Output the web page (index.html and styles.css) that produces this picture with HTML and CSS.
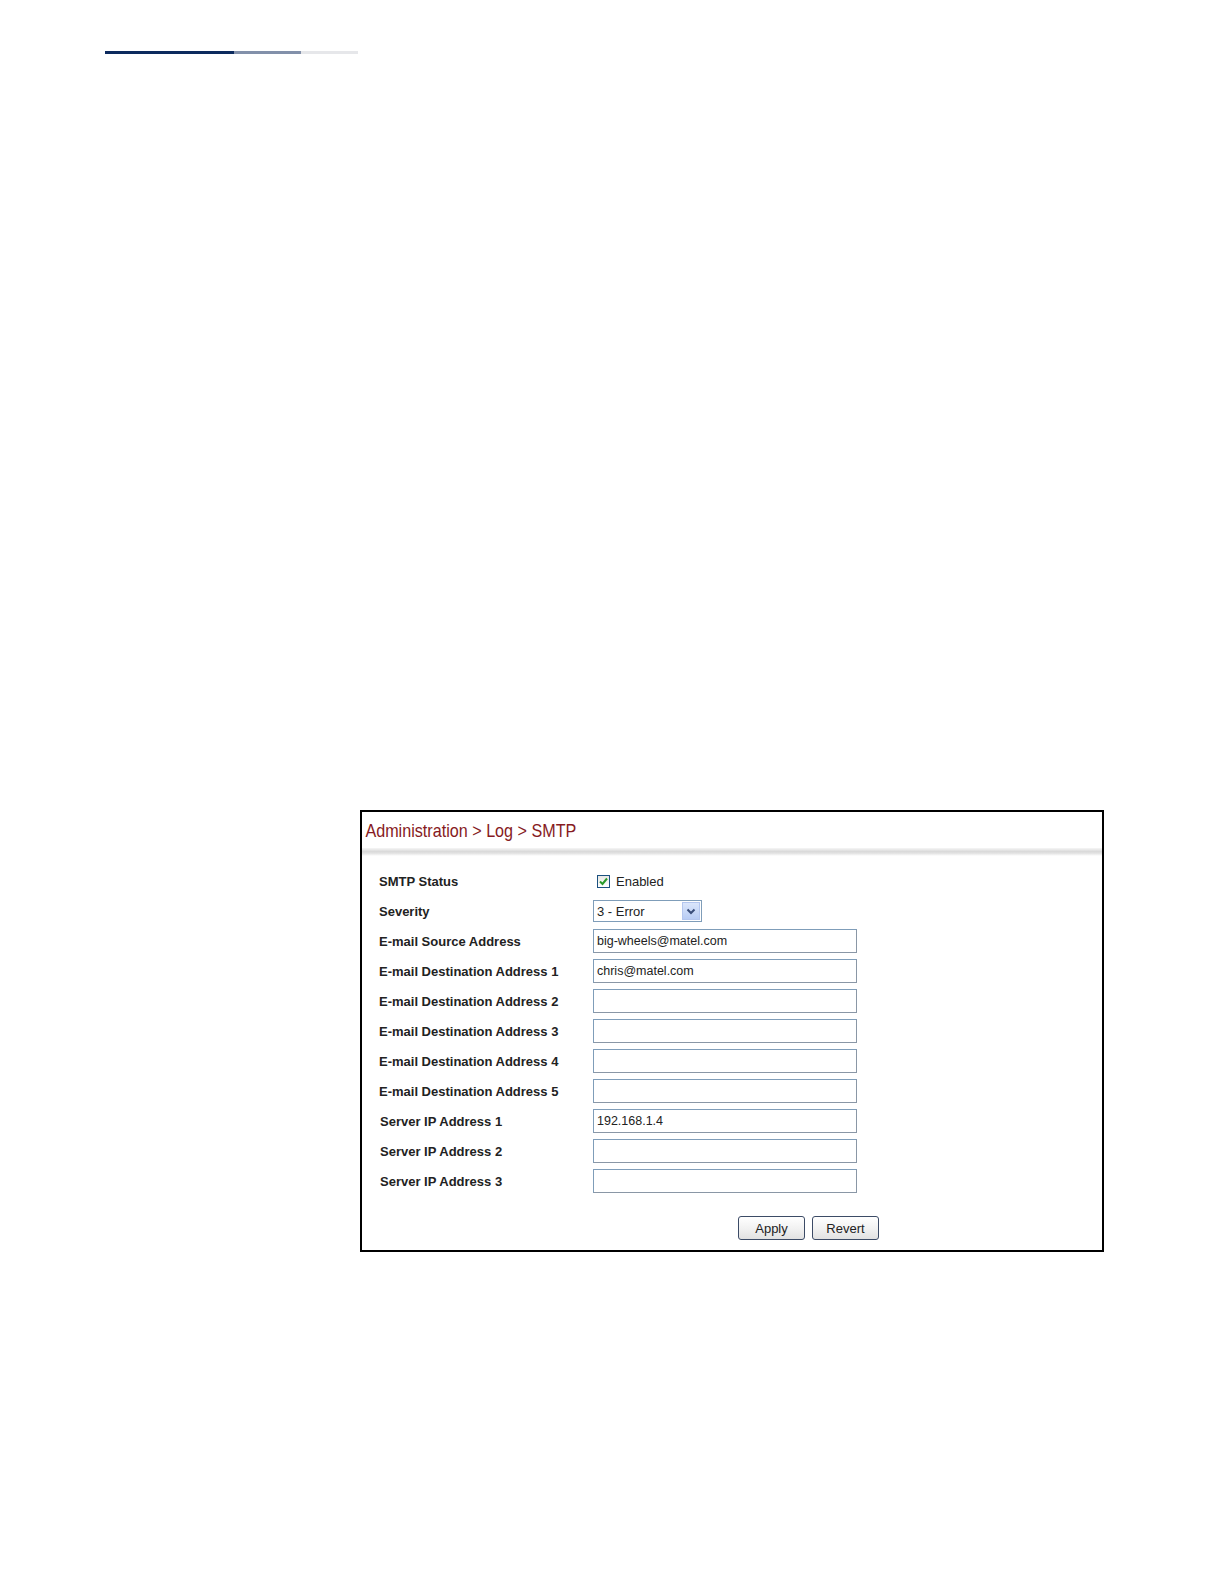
FILE: index.html
```html
<!DOCTYPE html>
<html>
<head>
<meta charset="utf-8">
<link rel="stylesheet" href="styles.css">
</head>
<body>
<div class="topbar"><span class="seg seg1"></span><span class="seg seg2"></span><span class="seg seg3"></span></div>
<div class="frame">
  <div class="header">
    <div class="title">Administration &gt; Log &gt; SMTP</div>
    <div class="rule"></div>
  </div>
  <div class="form">
    <div class="row"><div class="label">SMTP Status</div><div class="field"><span class="check"><svg width="9" height="9" viewBox="0 0 9 9"><path d="M1 4.5 L3.5 7 L8 1.5" fill="none" stroke="#2a9a2a" stroke-width="2"/></svg></span><span class="enabled">Enabled</span></div></div>
    <div class="row"><div class="label">Severity</div><div class="field"><div class="select"><span class="seltext">3 - Error</span><span class="selbtn"><svg width="10" height="7" viewBox="0 0 10 7"><path d="M1.5 1.5 L5 5 L8.5 1.5" fill="none" stroke="#3a4e7a" stroke-width="2"/></svg></span></div></div></div>
    <div class="row"><div class="label">E-mail Source Address</div><div class="field"><div class="input">big-wheels@matel.com</div></div></div>
    <div class="row"><div class="label">E-mail Destination Address 1</div><div class="field"><div class="input">chris@matel.com</div></div></div>
    <div class="row"><div class="label">E-mail Destination Address 2</div><div class="field"><div class="input"></div></div></div>
    <div class="row"><div class="label">E-mail Destination Address 3</div><div class="field"><div class="input"></div></div></div>
    <div class="row"><div class="label">E-mail Destination Address 4</div><div class="field"><div class="input"></div></div></div>
    <div class="row"><div class="label">E-mail Destination Address 5</div><div class="field"><div class="input"></div></div></div>
    <div class="row"><div class="label lab2">Server IP Address 1</div><div class="field"><div class="input">192.168.1.4</div></div></div>
    <div class="row"><div class="label lab2">Server IP Address 2</div><div class="field"><div class="input"></div></div></div>
    <div class="row"><div class="label lab2">Server IP Address 3</div><div class="field"><div class="input"></div></div></div>
  </div>
  <div class="buttons"><span class="btn">Apply</span><span class="btn">Revert</span></div>
</div>
</body>
</html>
```
FILE: styles.css
```css
html, body { margin: 0; padding: 0; background: #fff; }
body { width: 1224px; height: 1584px; font-family: "Liberation Sans", Arial, sans-serif; color: #222; }
.topbar { display: flex; margin: 51px 0 0 105px; height: 3px; }
.seg { display: block; height: 3px; }
.seg1 { width: 129px; background: #0c2a5e; }
.seg2 { width: 67px; background: #8290aa; }
.seg3 { width: 57px; background: #e6e7ea; }
.frame { margin: 756px 0 0 360px; width: 740px; height: 438px; border: 2px solid #000; display: flex; flex-direction: column; }
.header { height: 46px; display: flex; flex-direction: column; }
.title { padding: 9px 0 0 4px; height: 27px; box-sizing: border-box; font-size: 19px; line-height: 20px; color: #861a22; transform: scaleX(0.85); transform-origin: left; white-space: nowrap; }
.rule { margin-top: 9px; height: 8px; background: linear-gradient(#f6f6f6, #d9d9d9 45%, #e6e6e6 70%, #fff); }
.form { padding: 8px 0 0 17px; display: flex; flex-direction: column; }
.row { display: flex; align-items: center; height: 30px; }
.label { width: 214px; font-size: 13px; font-weight: bold; color: #222; white-space: nowrap; }
.lab2 { padding-left: 1px; width: 213px; }
.field { display: flex; align-items: center; }
.check { width: 13px; height: 13px; box-sizing: border-box; border: 1px solid #1c5180; background: linear-gradient(#e8e8e4, #fff); display: flex; align-items: center; justify-content: center; margin-left: 4px; }
.enabled { margin-left: 6px; font-size: 13px; color: #222; }
.select { width: 109px; height: 22px; box-sizing: border-box; border: 1px solid #7f9db9; display: flex; align-items: center; justify-content: space-between; }
.seltext { font-size: 13px; padding-left: 3px; }
.selbtn { width: 18px; height: 18px; margin-right: 1px; background: linear-gradient(#dbe6fb, #b8ccf4); border: 1px solid #b4c6ee; box-sizing: border-box; display: flex; align-items: center; justify-content: center; }
.input { width: 264px; height: 24px; box-sizing: border-box; border: 1px solid #8a97a6; border-top-color: #7f9db9; border-left-color: #7f9db9; padding: 0 3px; font-size: 12.5px; line-height: 22px; color: #222; }
.buttons { display: flex; gap: 7px; margin: 20px 0 0 376px; }
.btn { width: 67px; height: 24px; box-sizing: border-box; border: 1px solid #3c4b66; border-radius: 3px; background: linear-gradient(#ffffff, #f2f2f2 50%, #e2e2e2); font-size: 13px; color: #222; display: flex; align-items: center; justify-content: center; }
```
